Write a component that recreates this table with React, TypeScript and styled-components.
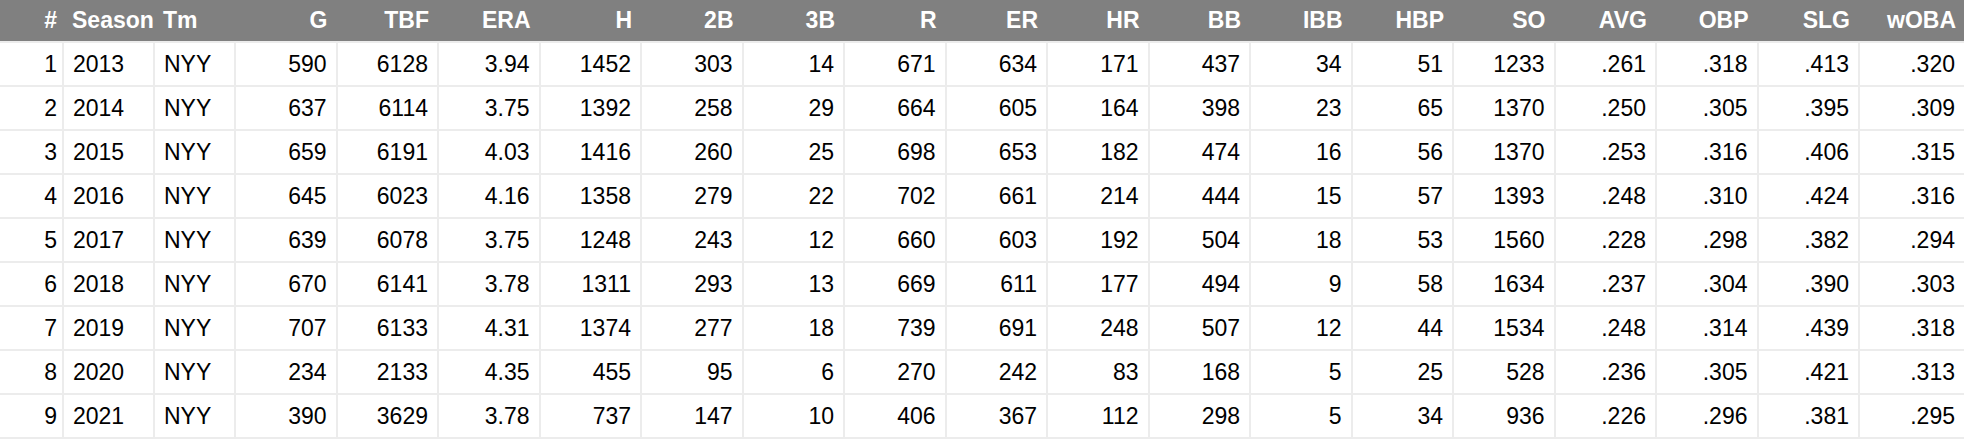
import React from 'react'
import styled, { createGlobalStyle } from 'styled-components'

const GlobalStyle = createGlobalStyle`
  html, body {
    margin: 0;
    padding: 0;
    background: #ffffff;
  }
  body {
    font-family: 'Liberation Sans', Arial, sans-serif;
  }
`

type Align = 'left' | 'right'

const columns: { key: string; label: string; align: Align }[] = [
  { key: 'no', label: '#', align: 'right' },
  { key: 'season', label: 'Season', align: 'left' },
  { key: 'tm', label: 'Tm', align: 'left' },
  { key: 'g', label: 'G', align: 'right' },
  { key: 'tbf', label: 'TBF', align: 'right' },
  { key: 'era', label: 'ERA', align: 'right' },
  { key: 'h', label: 'H', align: 'right' },
  { key: 'b2', label: '2B', align: 'right' },
  { key: 'b3', label: '3B', align: 'right' },
  { key: 'r', label: 'R', align: 'right' },
  { key: 'er', label: 'ER', align: 'right' },
  { key: 'hr', label: 'HR', align: 'right' },
  { key: 'bb', label: 'BB', align: 'right' },
  { key: 'ibb', label: 'IBB', align: 'right' },
  { key: 'hbp', label: 'HBP', align: 'right' },
  { key: 'so', label: 'SO', align: 'right' },
  { key: 'avg', label: 'AVG', align: 'right' },
  { key: 'obp', label: 'OBP', align: 'right' },
  { key: 'slg', label: 'SLG', align: 'right' },
  { key: 'woba', label: 'wOBA', align: 'right' },
]

// 시즌별 투수 기록
const rows: string[][] = [
  ['1', '2013', 'NYY', '590', '6128', '3.94', '1452', '303', '14', '671', '634', '171', '437', '34', '51', '1233', '.261', '.318', '.413', '.320'],
  ['2', '2014', 'NYY', '637', '6114', '3.75', '1392', '258', '29', '664', '605', '164', '398', '23', '65', '1370', '.250', '.305', '.395', '.309'],
  ['3', '2015', 'NYY', '659', '6191', '4.03', '1416', '260', '25', '698', '653', '182', '474', '16', '56', '1370', '.253', '.316', '.406', '.315'],
  ['4', '2016', 'NYY', '645', '6023', '4.16', '1358', '279', '22', '702', '661', '214', '444', '15', '57', '1393', '.248', '.310', '.424', '.316'],
  ['5', '2017', 'NYY', '639', '6078', '3.75', '1248', '243', '12', '660', '603', '192', '504', '18', '53', '1560', '.228', '.298', '.382', '.294'],
  ['6', '2018', 'NYY', '670', '6141', '3.78', '1311', '293', '13', '669', '611', '177', '494', '9', '58', '1634', '.237', '.304', '.390', '.303'],
  ['7', '2019', 'NYY', '707', '6133', '4.31', '1374', '277', '18', '739', '691', '248', '507', '12', '44', '1534', '.248', '.314', '.439', '.318'],
  ['8', '2020', 'NYY', '234', '2133', '4.35', '455', '95', '6', '270', '242', '83', '168', '5', '25', '528', '.236', '.305', '.421', '.313'],
  ['9', '2021', 'NYY', '390', '3629', '3.78', '737', '147', '10', '406', '367', '112', '298', '5', '34', '936', '.226', '.296', '.381', '.295'],
]

function App() {
  return (
    <>
      <GlobalStyle />
      <ScTable>
        {columns.map(col => (
          <ScHeadCell key={col.key} $align={col.align} $first={col.key === 'no'}>
            {col.label}
          </ScHeadCell>
        ))}
        {rows.map(row =>
          row.map((value, i) => (
            <ScCell
              key={row[0] + '-' + columns[i].key}
              $align={columns[i].align}
              $first={i === 0}
            >
              {value}
            </ScCell>
          ))
        )}
      </ScTable>
    </>
  )
}

const ScTable = styled.div`
  width: 1964px;
  display: grid;
  grid-template-columns: 62px 89px 79px repeat(16, 99.5px) 1fr;
  grid-template-rows: 41px;
  grid-auto-rows: 42px;
  gap: 2px;
  background-color: #ececec;
  padding-bottom: 2px;
`

const ScHeadCell = styled.div<{ $align: Align; $first: boolean }>`
  display: flex;
  align-items: center;
  justify-content: ${p => (p.$align === 'right' ? 'flex-end' : 'flex-start')};
  padding: 0 ${p => (p.$first ? '5px' : '8px')};
  background-color: #808080;
  color: #ffffff;
  font-weight: bold;
  font-size: 23px;
  white-space: nowrap;
  box-shadow: 2px 0 0 #808080;
  overflow: visible;
  position: relative;
`

const ScCell = styled.div<{ $align: Align; $first: boolean }>`
  display: flex;
  align-items: center;
  justify-content: ${p => (p.$align === 'right' ? 'flex-end' : 'flex-start')};
  padding: 0 ${p => (p.$first ? '5px' : '9px')};
  background-color: #ffffff;
  color: #000000;
  font-size: 23px;
  white-space: nowrap;
`

export default App
